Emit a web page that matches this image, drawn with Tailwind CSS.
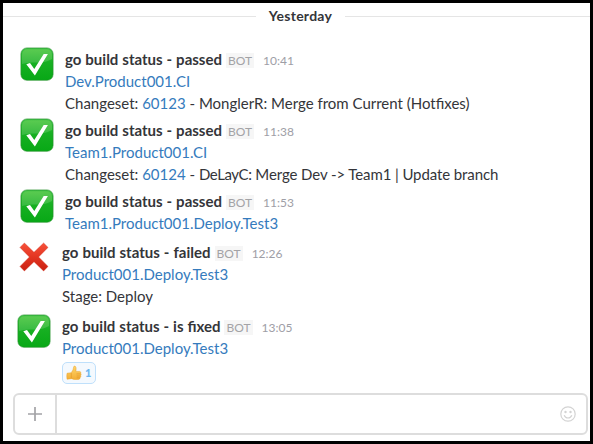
<!DOCTYPE html>
<html lang="en">
<head>
<meta charset="utf-8">
<title>Build status</title>
<script src="https://cdn.jsdelivr.net/npm/@tailwindcss/browser@4"></script>
</head>
<body class="w-[593px] h-[444px] overflow-hidden bg-white font-[Lato,sans-serif] text-[15px] leading-[22px] text-[#343539]">
<svg class="absolute h-0 w-0">
  <defs>
    <linearGradient id="green" x1="0" y1="0" x2="0" y2="1"><stop offset="0" stop-color="#3fc046"/><stop offset=".45" stop-color="#17b022"/><stop offset="1" stop-color="#08a816"/></linearGradient>
    <linearGradient id="gloss" x1="0" y1="0" x2="0" y2="1"><stop offset="0" stop-color="#5acb50"/><stop offset="1" stop-color="#37ba42"/></linearGradient>
    <linearGradient id="red" x1="0" y1="0" x2="0" y2="1"><stop offset="0" stop-color="#f8513a"/><stop offset=".5" stop-color="#e33522"/><stop offset="1" stop-color="#c91f10"/></linearGradient>
    <linearGradient id="hand" x1="0" y1="0" x2="0" y2="1"><stop offset="0" stop-color="#ffd66b"/><stop offset="1" stop-color="#f3ae35"/></linearGradient>
    <symbol id="check" viewBox="0 0 34 34">
      <rect x=".9" y=".9" width="32.2" height="32.4" rx="6" fill="url(#green)" stroke="#268f2b" stroke-opacity=".75" stroke-width=".8"/>
      <path d="M2 8Q2 2.200 8 2.200H26Q32 2.200 32 8V12Q25 16 16 15.500Q8 15 2 17Z" fill="url(#gloss)"/>
      <path d="M6.300 17.200L10 15.900L14.300 22L23.700 6.900H27.900L14.900 28.500Z" fill="#fff"/>
    </symbol>
    <symbol id="cross" viewBox="0 0 30 30">
      <path d="M1 5.400L5.400 1L15 10.300L24.600 1L29 5.400L19.600 15L29 24.400L24.600 29L15 19.700L5.400 29L1 24.400L10.400 15Z" fill="url(#red)" stroke="#cf301e" stroke-opacity=".6" stroke-width=".7" stroke-linejoin="round"/>
    </symbol>
  </defs>
</svg>
<div class="flex h-full flex-col border-[3px] border-black">
  <div class="mt-[2px] flex h-[22px] items-center">
    <div class="h-px w-[253px] bg-[#e5e5e5]"></div>
    <div class="w-[89px] text-center text-[14px] font-bold tracking-[.25px]">Yesterday</div>
    <div class="h-px flex-1 bg-[#e5e5e5]"></div>
  </div>

  <main class="mt-[21px] flex flex-col pl-[14px]">
    <article class="flex pl-[3px]">
      <svg class="-mt-px h-[34px] w-[34px] shrink-0"><use href="#check"/></svg>
      <div class="pl-[11px]">
        <div class="flex h-[22px] items-baseline"><b class="[word-spacing:.3px]">go build status - passed</b><span class="ml-[4px] h-[15px] bg-[#f6f6f6] px-[2px] text-[12px] leading-[15px] text-[#a3a3a6]">BOT</span><time class="ml-[9px] text-[12px] text-[#9e9ea6]">10:41</time></div>
        <p class="text-[#357bbd]">Dev.Product001.CI</p>
        <p>Changeset: <span class="text-[#357bbd]">60123</span> - MonglerR: Merge from Current (Hotfixes)</p>
      </div>
    </article>
    <article class="mt-[5px] flex pl-[3px]">
      <svg class="-mt-px h-[34px] w-[34px] shrink-0"><use href="#check"/></svg>
      <div class="pl-[11px]">
        <div class="flex h-[22px] items-baseline"><b class="[word-spacing:.3px]">go build status - passed</b><span class="ml-[4px] h-[15px] bg-[#f6f6f6] px-[2px] text-[12px] leading-[15px] text-[#a3a3a6]">BOT</span><time class="ml-[9px] text-[12px] text-[#9e9ea6]">11:38</time></div>
        <p class="text-[#357bbd]">Team1.Product001.CI</p>
        <p>Changeset: <span class="text-[#357bbd]">60124</span> - <span class="tracking-[-.4px]">DeLayC:</span><span class="tracking-[-.1px]"> Merge Dev -&gt; Team1 | Update branch</span></p>
      </div>
    </article>
    <article class="mt-[5px] flex pl-[3px]">
      <svg class="-mt-px h-[34px] w-[34px] shrink-0"><use href="#check"/></svg>
      <div class="pl-[11px]">
        <div class="flex h-[22px] items-baseline"><b class="[word-spacing:.3px]">go build status - passed</b><span class="ml-[4px] h-[15px] bg-[#f6f6f6] px-[2px] text-[12px] leading-[15px] text-[#a3a3a6]">BOT</span><time class="ml-[9px] text-[12px] text-[#9e9ea6]">11:53</time></div>
        <p class="text-[#357bbd]">Team1.Product001.Deploy.Test3</p>
      </div>
    </article>
    <article class="mt-[7px] flex">
      <svg class="mx-[2px] mt-px h-[30px] w-[30px] shrink-0"><use href="#cross"/></svg>
      <div class="pl-[11px]">
        <div class="flex h-[22px] items-baseline"><b class="[word-spacing:.4px]">go build status - failed</b><span class="ml-[4px] h-[15px] bg-[#f6f6f6] px-[2px] text-[12px] leading-[15px] text-[#a3a3a6]">BOT</span><time class="ml-[9px] text-[12px] text-[#9e9ea6]">12:26</time></div>
        <p class="text-[#357bbd]">Product001.Deploy.Test3</p>
        <p>Stage: Deploy</p>
      </div>
    </article>
    <article class="mt-[8px] flex">
      <svg class="-mt-px h-[34px] w-[34px] shrink-0"><use href="#check"/></svg>
      <div class="pl-[11px]">
        <div class="flex h-[22px] items-baseline"><b class="[word-spacing:.3px]">go build status - is fixed</b><span class="ml-[4px] h-[15px] bg-[#f6f6f6] px-[2px] text-[12px] leading-[15px] text-[#a3a3a6]">BOT</span><time class="ml-[9px] text-[12px] text-[#9e9ea6]">13:05</time></div>
        <p class="text-[#357bbd]">Product001.Deploy.Test3</p>
        <div class="mt-[3px] flex h-[22px] w-[34px] items-center rounded-[5px] border border-[#bfe0fb] bg-[#f4f9fe] pl-[3px]">
          <svg class="h-[16px] w-[16px]" viewBox="0 0 16 16"><path d="M1 8.300Q3.500 7.800 5.200 7.800Q7.300 5.500 7.700 1.900Q8 .7 9 1Q10.700 1.800 9.900 6.400H13.800Q15.300 6.700 14.700 8.300Q15.600 9.200 14.700 10.400Q15.200 11.600 14.200 12.500Q14.300 14 12.700 14.400Q8.500 15 5.600 13.700L1 14.200Q.5 11 1 8.300Z" fill="url(#hand)" stroke="#e9a22e" stroke-width=".5"/><path d="M5.300 8V13.400M10.500 8.900H14.300M10.700 11H14.300M10.700 12.800H13.800" stroke="#df9426" stroke-width=".6" fill="none"/></svg>
          <span class="ml-[3px] text-[11px] font-black leading-[20px] text-[#6db7f0]">1</span>
        </div>
      </div>
    </article>
  </main>

  <div class="mt-[9px] ml-[10px] flex h-[42px] w-[575px] shrink-0 rounded-[6px] border-2 border-[#dddddd]">
    <div class="flex w-[42px] items-center justify-center border-r-2 border-[#dddddd]">
      <svg class="h-[14px] w-[14px]" viewBox="0 0 14 14"><path d="M7 0V14M0 7H14" stroke="#a3a3a6" stroke-width="1.700"/></svg>
    </div>
    <div class="flex flex-1 items-center justify-end pr-[10px]">
      <svg class="h-[16px] w-[16px]" viewBox="0 0 16 16" fill="none" stroke="#d3d3d3" stroke-width="1.200"><circle cx="8" cy="8" r="7.200"/><path d="M4.200 9.300Q5.200 12 8 12T11.800 9.300"/><circle cx="5.500" cy="6" r="1.200" fill="#d3d3d3" stroke="none"/><circle cx="10.500" cy="6" r="1.200" fill="#d3d3d3" stroke="none"/></svg>
    </div>
  </div>
</div>
</body>
</html>
